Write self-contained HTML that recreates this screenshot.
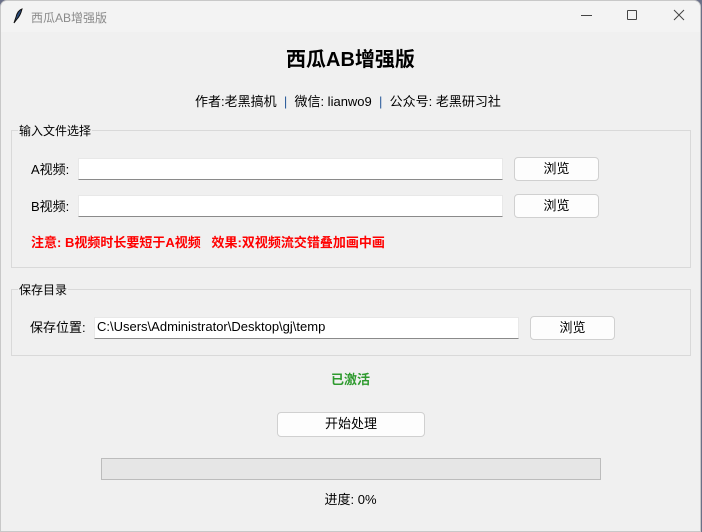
<!DOCTYPE html>
<html><head><meta charset="utf-8"><style>
*{margin:0;padding:0;box-sizing:border-box}
body{width:702px;height:532px;background:#6a7088;position:relative;overflow:hidden;font-family:"Liberation Sans","Microsoft YaHei","Noto Sans CJK SC",sans-serif;font-size:13px;color:#000}
.win{position:absolute;left:0;top:0;width:701px;height:532px;background:#f0f0f0;border:1px solid #c8c8c8;border-radius:7px 7px 0 0;overflow:hidden}
.tb{position:absolute;left:0;top:0;width:100%;height:31px;background:#f3f3f3}
.a{position:absolute;white-space:nowrap}
.ent{position:absolute;background:#fff;border-bottom:1px solid #8a8a8a;border-top:1px solid #e8e8e8;border-left:1px solid #e8e8e8;border-right:1px solid #e8e8e8}
.btn{position:absolute;background:#fdfdfd;border:1px solid #d0d0d0;border-radius:4px;text-align:center;font-size:13px}
.fr{position:absolute;border:1px solid #d9d9d9}
.lbl{position:absolute;background:#f0f0f0;padding:0 1px;font-size:12px}
</style></head><body>
<div class="win">
<div class="tb">
<svg class="a" style="left:10px;top:7px" width="12" height="16" viewBox="0 0 12 16"><path d="M3 15 L5 9 C6 5 8 2 11 1 C10 5 9 8 6 11 Z" fill="#2a4a7a" stroke="#111" stroke-width="1"/></svg>
<div class="a" style="left:30px;top:8px;color:#8a8a8a;font-size:12px">西瓜AB增强版</div>
<div class="a" style="left:580px;top:14px;width:11px;height:1px;background:#444"></div>
<div class="a" style="left:626px;top:9px;width:10px;height:10px;border:1px solid #444;border-radius:1px"></div>
<svg class="a" style="left:672px;top:8px" width="12" height="12" viewBox="0 0 12 12"><path d="M1 1L11 11M11 1L1 11" stroke="#444" stroke-width="1"/></svg>
</div>
<div class="a" style="left:0;width:100%;top:42px;text-align:center;font-weight:bold;font-size:20px">西瓜AB增强版</div>
<div class="a" style="left:194px;top:90px;font-size:13px">作者:老黑搞机 &nbsp;<span style="color:#2a5a9a">|</span>&nbsp; 微信: lianwo9 &nbsp;<span style="color:#2a5a9a">|</span>&nbsp; 公众号: 老黑研习社</div>

<div class="fr" style="left:10px;top:129px;width:680px;height:138px"></div>
<div class="lbl" style="left:17px;top:121px">输入文件选择</div>
<div class="a" style="left:30px;top:158px">A视频:</div>
<div class="ent" style="left:77px;top:157px;width:425px;height:22px"></div>
<div class="btn" style="left:513px;top:156px;width:85px;height:24px;line-height:22px">浏览</div>
<div class="a" style="left:30px;top:195px">B视频:</div>
<div class="ent" style="left:77px;top:194px;width:425px;height:22px"></div>
<div class="btn" style="left:513px;top:193px;width:85px;height:24px;line-height:22px">浏览</div>
<div class="a" style="left:30px;top:231px;color:#f00;font-weight:bold">注意: B视频时长要短于A视频 &nbsp; 效果:双视频流交错叠加画中画</div>

<div class="fr" style="left:10px;top:288px;width:680px;height:67px"></div>
<div class="lbl" style="left:17px;top:280px">保存目录</div>
<div class="a" style="left:29px;top:316px">保存位置:</div>
<div class="ent" style="left:93px;top:316px;width:425px;height:22px;padding:1px 2px;font-size:13px;line-height:16px">C:\Users\Administrator\Desktop\gj\temp</div>
<div class="btn" style="left:529px;top:315px;width:85px;height:24px;line-height:22px">浏览</div>

<div class="a" style="left:0;width:100%;top:368px;text-align:center;color:#2e9a2e;font-weight:bold">已激活</div>
<div class="btn" style="left:276px;top:411px;width:148px;height:25px;line-height:22px">开始处理</div>
<div class="a" style="left:100px;top:457px;width:500px;height:22px;background:#e6e6e6;border:1px solid #bcbcbc"></div>
<div class="a" style="left:0;width:100%;top:488px;text-align:center">进度: 0%</div>
</div>
</body></html>
